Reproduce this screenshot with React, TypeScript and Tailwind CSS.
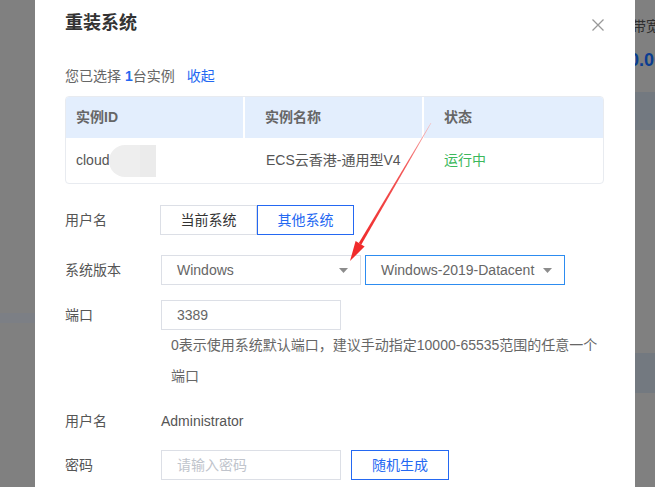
import React from "react";

function Caret() {
  return (
    <svg width="9" height="5" viewBox="0 0 9 5" className="shrink-0">
      <path d="M0 0 L9 0 L4.5 5 Z" fill="#8c8c8c" />
    </svg>
  );
}

function Arrow() {
  return (
    <svg className="absolute left-0 top-0 pointer-events-none" width="655" height="487" viewBox="0 0 655 487">
      <defs>
        <linearGradient id="shaft" gradientUnits="userSpaceOnUse" x1="431" y1="123" x2="360" y2="244">
          <stop offset="0" stopColor="#f7b7b7" />
          <stop offset="0.35" stopColor="#f25a5a" />
          <stop offset="1" stopColor="#f02b2b" />
        </linearGradient>
      </defs>
      <polygon
        points="431.3,123.1 430.7,122.9 358.8,243.0 361.4,244.6"
        fill="url(#shaft)"
      />
      <polygon points="350,261 364.6,246.6 355.6,241.0" fill="#f02b2b" />
    </svg>
  );
}

export default function App() {
  return (
    <div className="relative w-[655px] h-[487px] overflow-hidden bg-[#808080] font-['Liberation_Sans','Noto_Sans_CJK_SC',sans-serif]">
      {/* dimmed page behind */}
      <div className="flex h-full">
        <div className="w-[35px] flex flex-col">
          <div className="mt-[313px] h-[10px] bg-[#7c7f85]" />
        </div>
        <div className="flex-1" />
        <div className="w-[40px] flex flex-col">
          <div className="mt-[16px] h-[20px] text-[14px] leading-[20px] text-[#2e2e2e] whitespace-nowrap pl-[17px]">带宽</div>
          <div className="mt-[14px] h-[20px] text-[18px] leading-[20px] font-bold text-[#0a3d91] whitespace-nowrap pl-[14px]">0.00</div>
          <div className="mt-[22px] h-[38px] bg-[#737980]" />
          <div className="mt-[223px] h-[40px] bg-[#737980]" />
        </div>
      </div>

      {/* modal */}
      <div className="absolute left-[35px] top-0 w-[600px] h-[487px] bg-white px-[30px] text-[14px]">
        <div className="flex items-center justify-between pt-[11px] h-[35px]">
          <div className="text-[18px] leading-[24px] font-bold text-[#333]">重装系统</div>
          <svg width="12" height="12" viewBox="0 0 12 12" className="mr-[1px] mt-[3px]">
            <path d="M0.5 0.5 L11.5 11.5 M11.5 0.5 L0.5 11.5" stroke="#999" strokeWidth="1.3" />
          </svg>
        </div>

        <div className="mt-[31px] h-[20px] leading-[20px] text-[#666] flex items-center">
          <span>您已选择&nbsp;</span>
          <span className="font-bold text-[#2468f2]">1</span>
          <span>台实例</span>
          <span className="ml-[12px] text-[#2468f2]">收起</span>
        </div>

        <div className="mt-[10px] w-[539px] border border-[#e8ebf0] rounded-[4px] overflow-hidden">
          <div className="grid grid-cols-3 h-[41px] bg-[#e3eefd] font-bold text-[#666]">
            <div className="flex items-center pl-[10px] border-r-2 border-white">实例ID</div>
            <div className="flex items-center pl-[20px] border-r-2 border-white">实例名称</div>
            <div className="flex items-center pl-[20px]">状态</div>
          </div>
          <div className="grid grid-cols-3 h-[45px] text-[#555]">
            <div className="flex items-center pl-[10px]">
              <span>cloud</span>
              <span className="flex h-[32px] w-[47px] rounded-l-full overflow-hidden">
                <span className="w-[31px] bg-[#eeeeee]" />
                <span className="w-[16px] bg-[#ebebeb]" />
              </span>
            </div>
            <div className="flex items-center pl-[21px]">ECS云香港-通用型V4</div>
            <div className="flex items-center pl-[20px] text-[#3cb85c]">运行中</div>
          </div>
        </div>

        <div className="mt-[21px] flex items-center h-[30px]">
          <div className="w-[95px] text-[#555]">用户名</div>
          <div className="flex">
            <div className="w-[97px] h-[30px] flex items-center justify-center border border-[#dcdfe6] text-[#333]">当前系统</div>
            <div className="w-[97px] h-[30px] flex items-center justify-center border border-[#2468f2] text-[#2468f2]">其他系统</div>
          </div>
        </div>

        <div className="mt-[20px] flex items-center h-[30px]">
          <div className="w-[96px] text-[#555]">系统版本</div>
          <div className="w-[200px] h-[30px] flex items-center justify-between border border-[#dcdfe6] pl-[15px] pr-[12px] text-[#666]">
            <span>Windows</span>
            <Caret />
          </div>
          <div className="ml-[4px] w-[200px] h-[30px] flex items-center justify-between border border-[#2d8cf0] pl-[15px] pr-[12px] text-[#666]">
            <span className="whitespace-nowrap">Windows-2019-Datacent</span>
            <Caret />
          </div>
        </div>

        <div className="mt-[15px] flex items-center h-[30px]">
          <div className="w-[96px] text-[#555]">端口</div>
          <div className="w-[180px] h-[30px] flex items-center border border-[#dcdfe6] pl-[15px] text-[#666]">3389</div>
        </div>
        <div className="ml-[106px] text-[#666] leading-[31px] whitespace-nowrap">
          <div>0表示使用系统默认端口，建议手动指定10000-65535范围的任意一个</div>
          <div>端口</div>
        </div>

        <div className="mt-[19px] flex items-center h-[20px] text-[#555]">
          <div className="w-[96px]">用户名</div>
          <div>Administrator</div>
        </div>

        <div className="mt-[19px] flex items-center h-[30px]">
          <div className="w-[96px] text-[#555]">密码</div>
          <div className="w-[180px] h-[30px] flex items-center border border-[#dcdfe6] pl-[15px] text-[#c0c4cc]">请输入密码</div>
          <div className="ml-[10px] w-[98px] h-[30px] flex items-center justify-center border border-[#2468f2] text-[#2468f2]">随机生成</div>
        </div>
      </div>

      <Arrow />
    </div>
  );
}
